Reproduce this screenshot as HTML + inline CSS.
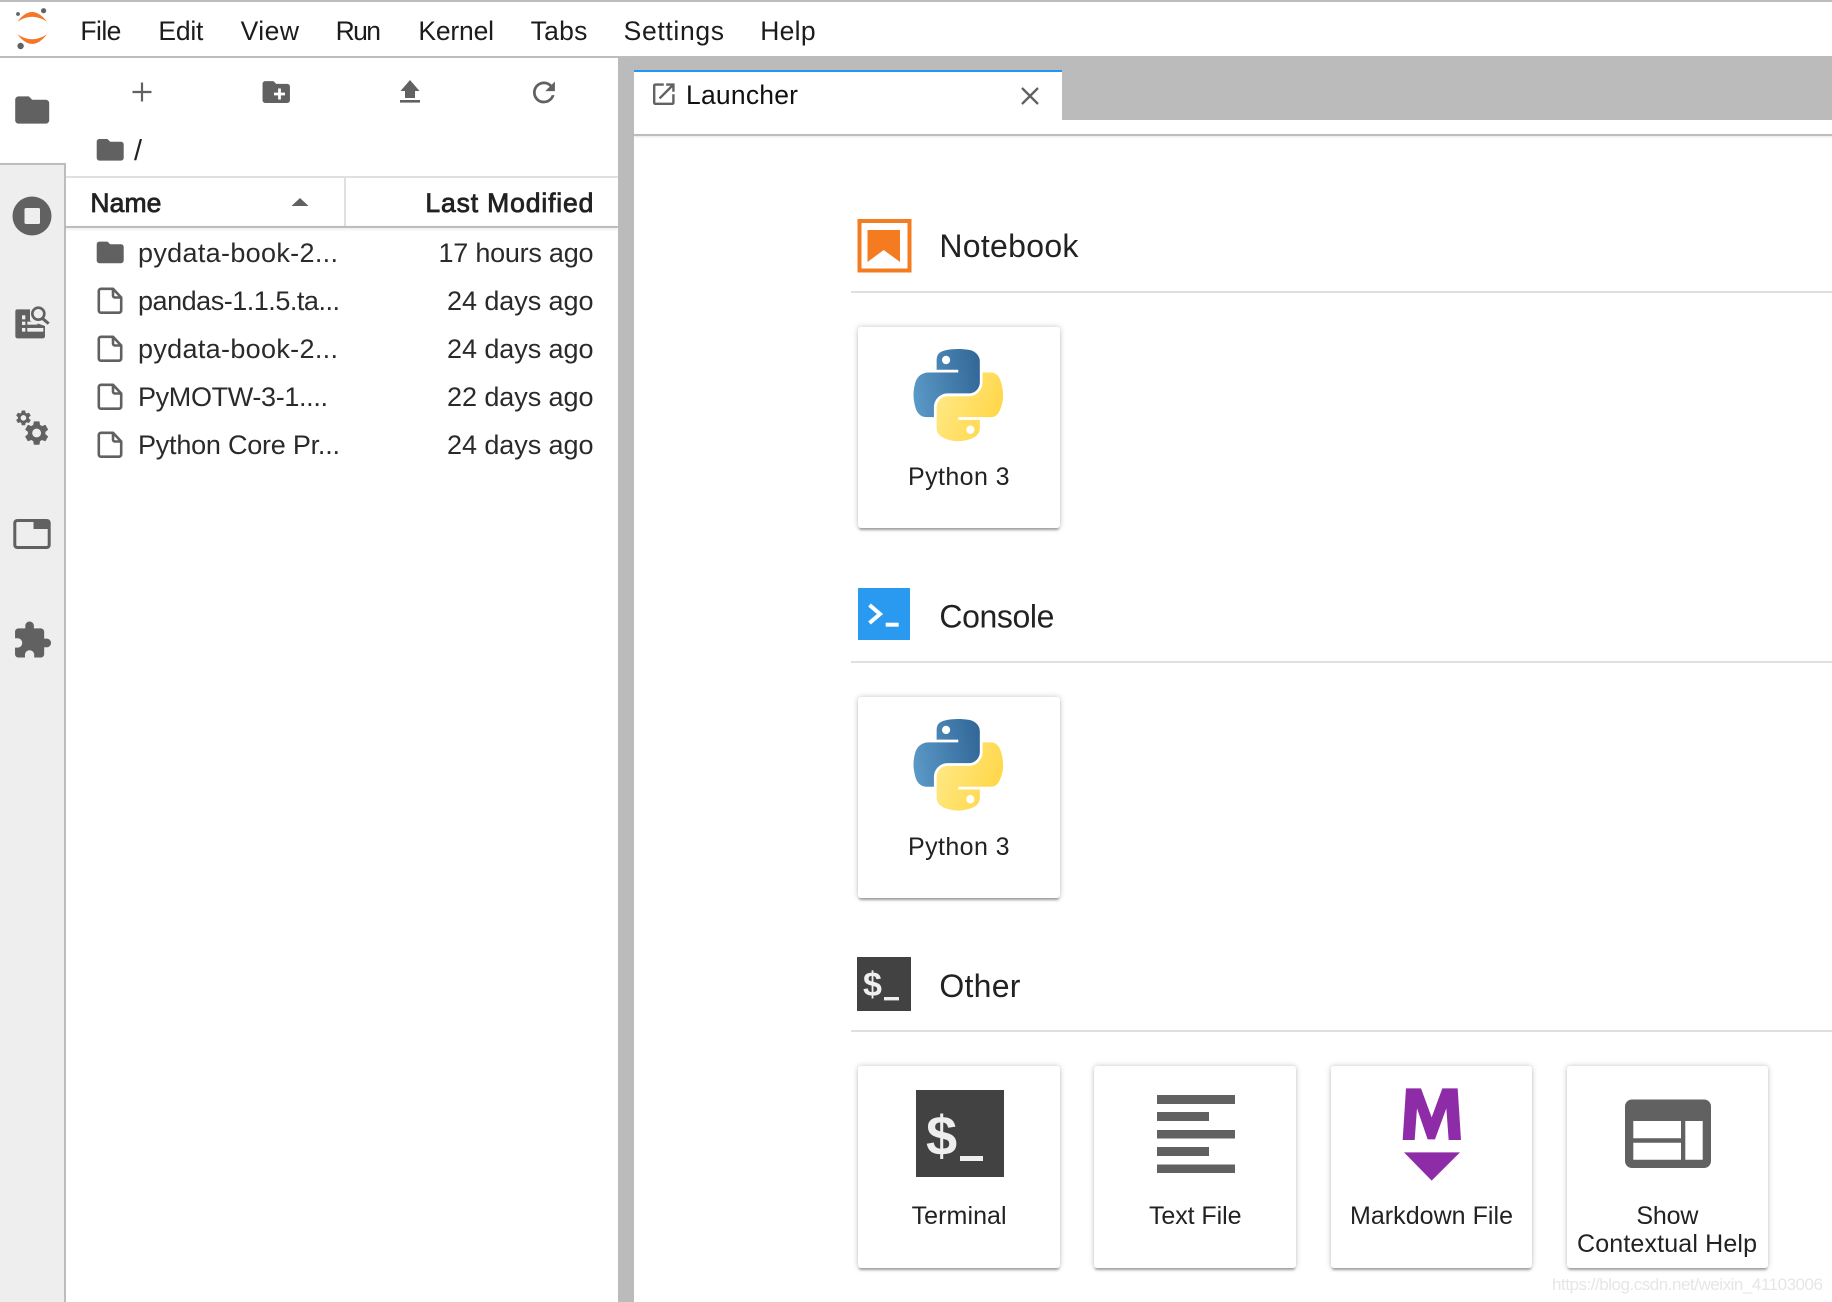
<!DOCTYPE html>
<html lang="en">
<head>
<meta charset="utf-8">
<title>JupyterLab</title>
<style>
html,body{margin:0;padding:0;background:#fff}
body{position:relative;width:1832px;height:1302px;overflow:hidden;font-family:"Liberation Sans",sans-serif}
.b{position:absolute}
.card{position:absolute;background:#fff;border-radius:3px;box-shadow:0 3px 2px -1px rgba(0,0,0,.3),0 0 6px rgba(0,0,0,.24)}
svg.o{position:absolute;left:0;top:0;filter:blur(.35px)}
text{font-family:"Liberation Sans",sans-serif;fill:#212121}
.m{font-size:26.5px;fill:#1c1c1c}
.r{font-size:27px;fill:#2a2a2a}
.h{font-size:26.5px;fill:#222;stroke:#222;stroke-width:.8px}
.s{font-size:32px;fill:#222}
.l{font-size:25px;fill:#222}
.ic{fill:#616161}
</style>
</head>
<body>
<div class="b" style="left:0;top:0;width:1832px;height:2px;background:#bdbdbd"></div>
<div class="b" style="left:0;top:56px;width:1832px;height:2px;background:#bdbdbd"></div>
<div class="b" style="left:0;top:58px;width:64px;height:1244px;background:#eee"></div>
<div class="b" style="left:0;top:58px;width:64px;height:105px;background:#fff"></div>
<div class="b" style="left:0;top:163px;width:65px;height:2px;background:#bdbdbd"></div>
<div class="b" style="left:64px;top:163px;width:2px;height:1139px;background:#bdbdbd"></div>
<div class="b" style="left:66px;top:176px;width:552px;height:2px;background:#e0e0e0"></div>
<div class="b" style="left:344px;top:178px;width:2px;height:48px;background:#e0e0e0"></div>
<div class="b" style="left:66px;top:226px;width:552px;height:2px;background:#bdbdbd;box-shadow:0 1px 3px rgba(0,0,0,.12)"></div>
<div class="b" style="left:618px;top:58px;width:16px;height:1244px;background:#bbb"></div>
<div class="b" style="left:634px;top:56px;width:1198px;height:64px;background:#bbb"></div>
<div class="b" style="left:634px;top:70px;width:428px;height:50px;background:#fff;border-top:2px solid #2196f3;box-sizing:border-box"></div>
<div class="b" style="left:634px;top:134px;width:1198px;height:2px;background:#bdbdbd;box-shadow:0 1px 2px rgba(0,0,0,.12)"></div>
<div class="b" style="left:851px;top:291px;width:981px;height:2px;background:#e0e0e0"></div>
<div class="b" style="left:851px;top:661px;width:981px;height:2px;background:#e0e0e0"></div>
<div class="b" style="left:851px;top:1030px;width:981px;height:2px;background:#e0e0e0"></div>
<div class="card" style="left:858px;top:326.5px;width:201.5px;height:201.5px"></div>
<div class="card" style="left:858px;top:696.5px;width:201.5px;height:201.5px"></div>
<div class="card" style="left:858px;top:1065.5px;width:201.5px;height:202px"></div>
<div class="card" style="left:1094px;top:1065.5px;width:201.5px;height:202px"></div>
<div class="card" style="left:1330.5px;top:1065.5px;width:201.5px;height:202px"></div>
<div class="card" style="left:1566.5px;top:1065.5px;width:201.5px;height:202px"></div>

<svg class="o" width="1832" height="1302" viewBox="0 0 1832 1302" xmlns="http://www.w3.org/2000/svg">
<defs>
<linearGradient id="pb" x1="0" y1=".62" x2="1" y2=".45"><stop offset="0" stop-color="#5a98c6"/><stop offset="1" stop-color="#33699a"/></linearGradient>
<linearGradient id="py" x1="0" y1=".3" x2="1" y2=".7"><stop offset="0" stop-color="#ffe986"/><stop offset="1" stop-color="#ffd543"/></linearGradient>
<g id="pylogo">
<path fill="url(#pb)" fill-rule="evenodd" d="M54.919 0.001c-4.584 0.022-8.961 0.413-12.812 1.095C30.76 3.099 28.7 7.295 28.7 15.032v10.219h26.813v3.406H18.638c-7.793 0-14.616 4.684-16.75 13.594-2.462 10.213-2.571 16.586 0 27.25 1.906 7.938 6.458 13.594 14.25 13.594h9.219v-12.25c0-8.85 7.657-16.656 16.75-16.656h26.781c7.455 0 13.406-6.138 13.406-13.625v-25.531c0-7.266-6.13-12.725-13.406-13.937C64.282 0.328 59.502-0.02 54.919 0.001zm-14.5 8.219c2.77 0 5.031 2.299 5.031 5.125 0 2.816-2.262 5.094-5.031 5.094-2.779 0-5.031-2.277-5.031-5.094 0-2.826 2.252-5.125 5.031-5.125z"/>
<path fill="url(#py)" fill-rule="evenodd" d="M85.638 28.657v11.906c0 9.231-7.826 17-16.75 17H42.106c-7.336 0-13.406 6.278-13.406 13.625v25.531c0 7.266 6.319 11.54 13.406 13.625 8.487 2.496 16.626 2.947 26.781 0 6.75-1.954 13.406-5.888 13.406-13.625V86.501H55.513v-3.406h40.188c7.793 0 10.696-5.436 13.406-13.594 2.799-8.399 2.68-16.476 0-27.25-1.926-7.757-5.604-13.594-13.406-13.594h-10.063zM70.575 93.313c2.779 0 5.031 2.277 5.031 5.094 0 2.826-2.252 5.125-5.031 5.125-2.77 0-5.031-2.299-5.031-5.125 0-2.816 2.262-5.094 5.031-5.094z"/>
</g>
<path id="folder" d="M10 4H4c-1.1 0-1.99.9-1.99 2L2 18c0 1.1.9 2 2 2h16c1.1 0 2-.9 2-2V8c0-1.1-.9-2-2-2h-8l-2-2z"/>
<g id="file" fill="none" stroke="#616161" stroke-width="2.6" stroke-linejoin="round">
<path d="M3.5 1.3H15.5L23.7 10V23a2.2 2.2 0 0 1-2.2 2.2H3.5A2.2 2.2 0 0 1 1.3 23V3.5A2.2 2.2 0 0 1 3.5 1.3z"/>
<path d="M15.5 1.3V8A2 2 0 0 0 17.5 10H23.7"/>
</g>
<path id="gear" fill-rule="evenodd" d="M19.14 12.94c.04-.3.06-.61.06-.94 0-.32-.02-.64-.07-.94l2.03-1.58c.18-.14.23-.41.12-.61l-1.92-3.32c-.12-.22-.37-.29-.59-.22l-2.39.96c-.5-.38-1.03-.7-1.62-.94l-.36-2.54c-.04-.24-.24-.41-.48-.41h-3.84c-.24 0-.43.17-.47.41l-.36 2.54c-.59.24-1.13.57-1.62.94l-2.39-.96c-.22-.08-.47 0-.59.22L2.74 8.87c-.12.21-.08.47.12.61l2.03 1.58c-.05.3-.09.63-.09.94s.02.64.07.94l-2.03 1.58c-.18.14-.23.41-.12.61l1.92 3.32c.12.22.37.29.59.22l2.39-.96c.5.38 1.03.7 1.62.94l.36 2.54c.05.24.24.41.48.41h3.84c.24 0 .44-.17.47-.41l.36-2.54c.59-.24 1.13-.56 1.62-.94l2.39.96c.22.08.47 0 .59-.22l1.92-3.32c.12-.22.07-.47-.12-.61l-2.01-1.58zM12 15.6c-1.98 0-3.6-1.62-3.6-3.6s1.62-3.6 3.6-3.6 3.6 1.62 3.6 3.6-1.62 3.6-3.6 3.6z"/>
</defs>

<!-- Jupyter logo -->
<path fill="#f37726" d="M17.5 21.7Q32 2.3 47 21.7Q32 11.7 17.5 21.7z"/>
<path fill="#f37726" d="M17.5 34.3Q32 53.7 47 34.3Q32 44.3 17.5 34.3z"/>
<circle cx="43.6" cy="10.7" r="2.6" fill="#616161"/>
<circle cx="18" cy="14" r="1.9" fill="#616161"/>
<circle cx="20.6" cy="46" r="3.2" fill="#616161"/>

<!-- Menu -->
<text class="m" x="80.4" y="40" textLength="41">File</text>
<text class="m" x="158.4" y="40" textLength="45">Edit</text>
<text class="m" x="240.6" y="40" textLength="58.4">View</text>
<text class="m" x="335.6" y="40" textLength="45.4">Run</text>
<text class="m" x="418.4" y="40" textLength="75.6">Kernel</text>
<text class="m" x="530.6" y="40" textLength="56.8">Tabs</text>
<text class="m" x="623.6" y="40" textLength="100.4">Settings</text>
<text class="m" x="760.2" y="40" textLength="55.4">Help</text>

<!-- Left sidebar icons -->
<use href="#folder" class="ic" transform="translate(11.8 89.6) scale(1.7)"/>
<circle cx="32" cy="216" r="19.5" fill="#616161"/>
<rect x="24.5" y="208" width="15.5" height="16" rx="1.5" fill="#eee"/>
<!-- property inspector -->
<g transform="translate(0 190) scale(.3333)">
<path class="ic" d="M52 358H90V392Q100 400 118 402L135 408V438Q135 445 128 445H53Q46 445 46 438V364Q46 358 52 358z"/>
<rect x="66" y="376" width="10" height="12" fill="#eee"/>
<rect x="66" y="395" width="10" height="10" fill="#eee"/>
<rect x="82" y="395" width="30" height="9" fill="#eee"/>
<rect x="66" y="414" width="10" height="11" fill="#eee"/>
<rect x="82" y="414" width="48" height="11" fill="#eee"/>
<circle cx="115" cy="371" r="18" fill="#eee" stroke="#616161" stroke-width="8"/>
<path d="M127 385L146 401" stroke="#616161" stroke-width="9" fill="none"/>
</g>
<use href="#gear" class="ic" transform="translate(14.2 408.6) scale(.77)"/>
<use href="#gear" class="ic" transform="translate(22 418.4) scale(1.22)"/>
<rect x="14.8" y="520.5" width="34.4" height="27" rx="2.5" fill="none" stroke="#616161" stroke-width="3"/>
<path class="ic" d="M33.5 519.5H48a2 2 0 0 1 2 2V529H33.5z"/>
<path class="ic" transform="translate(11.6 619.8) scale(1.714)" d="M20.5 11H19V7c0-1.1-.9-2-2-2h-4V3.5C13 2.12 11.88 1 10.5 1S8 2.12 8 3.5V5H4c-1.1 0-1.99.9-1.99 2v3.8H3.5c1.49 0 2.7 1.21 2.7 2.7s-1.21 2.7-2.7 2.7H2V20c0 1.1.9 2 2 2h3.8v-1.5c0-1.49 1.21-2.7 2.7-2.7 1.49 0 2.7 1.21 2.7 2.7V22H17c1.1 0 2-.9 2-2v-4h1.5c1.38 0 2.5-1.12 2.5-2.5S21.88 11 20.5 11z"/>

<!-- File browser toolbar -->
<path d="M142 82.5V101.5M132.5 92H151.5" stroke="#616161" stroke-width="2.2" fill="none"/>
<use href="#folder" class="ic" transform="translate(259.8 75.6) scale(1.37)"/>
<path d="M279.5 88.5V99.5M274 94H285" stroke="#fff" stroke-width="2.8" fill="none"/>
<path class="ic" d="M410 80L419.5 91H415V98H405V91H400.5z"/>
<rect x="400" y="100" width="20" height="2.6" class="ic"/>
<path class="ic" transform="translate(527.5 76) scale(1.37)" d="M17.65 6.35C16.2 4.9 14.21 4 12 4c-4.42 0-7.99 3.58-7.99 8s3.57 8 7.99 8c3.73 0 6.84-2.55 7.73-6h-2.08c-.82 2.33-3.04 4-5.65 4-3.31 0-6-2.69-6-6s2.69-6 6-6c1.66 0 3.14.69 4.22 1.78L13 11h7V4l-2.35 2.35z"/>

<!-- Breadcrumb -->
<use href="#folder" class="ic" transform="translate(94 133.6) scale(1.35)"/>
<text x="134" y="160" style="font-size:29px;fill:#222" textLength="8">/</text>

<!-- Listing header -->
<text class="h" x="90.4" y="212" textLength="71">Name</text>
<path class="ic" d="M291.5 206L300 198L308.5 206z"/>
<text class="h" x="425.4" y="212" textLength="168">Last Modified</text>

<!-- Listing rows -->
<use href="#folder" class="ic" transform="translate(94 236.2) scale(1.35)"/>
<text class="r" x="138" y="262" textLength="200">pydata-book-2...</text>
<text class="r" x="438.5" y="262" textLength="155">17 hours ago</text>
<use href="#file" transform="translate(97.5 287.5)"/>
<text class="r" x="138" y="310" textLength="202">pandas-1.1.5.ta...</text>
<text class="r" x="447" y="310" textLength="146.5">24 days ago</text>
<use href="#file" transform="translate(97.5 335.5)"/>
<text class="r" x="138" y="358" textLength="200">pydata-book-2...</text>
<text class="r" x="447" y="358" textLength="146.5">24 days ago</text>
<use href="#file" transform="translate(97.5 383.5)"/>
<text class="r" x="138" y="406" textLength="190">PyMOTW-3-1....</text>
<text class="r" x="447" y="406" textLength="146.5">22 days ago</text>
<use href="#file" transform="translate(97.5 431.5)"/>
<text class="r" x="138" y="454" textLength="202">Python Core Pr...</text>
<text class="r" x="447" y="454" textLength="146.5">24 days ago</text>

<!-- Tab -->
<path class="ic" transform="translate(649.4 79.8) scale(1.2)" d="M19 19H5V5h7V3H5c-1.11 0-2 .9-2 2v14c0 1.1.89 2 2 2h14c1.1 0 2-.9 2-2v-7h-2v7zM14 3v2h3.59l-9.83 9.83 1.41 1.41L19 6.41V10h2V3h-7z"/>
<text class="m" x="686" y="104" textLength="112" style="fill:#111">Launcher</text>
<path d="M1022 88L1038 104M1038 88L1022 104" stroke="#616161" stroke-width="2.3" fill="none"/>

<!-- Notebook section -->
<rect x="859.5" y="221" width="50" height="49.5" fill="#fff" stroke="#f47b20" stroke-width="4"/>
<path fill="#f47b20" d="M867.5 230H900V262L883.7 250L867.5 262z"/>
<text class="s" x="939.4" y="257" textLength="139">Notebook</text>
<use href="#pylogo" transform="translate(913.5 349) scale(.806 .82)"/>
<text class="l" x="908" y="484.8" textLength="101.5">Python 3</text>

<!-- Console section -->
<rect x="858" y="588" width="52" height="52" fill="#2a9af0"/>
<path d="M869.5 605L880 614L869.5 623" fill="none" stroke="#fff" stroke-width="4"/>
<rect x="885.7" y="622.7" width="13" height="4" fill="#fff"/>
<text class="s" x="939.4" y="627.3" textLength="115">Console</text>
<use href="#pylogo" transform="translate(913.5 719) scale(.806 .815)"/>
<text class="l" x="908" y="855" textLength="101.5">Python 3</text>

<!-- Other section -->
<rect x="857" y="957" width="54" height="54" fill="#424242"/>
<text x="863" y="996" style="font-size:34px;font-weight:700;fill:#eee">$</text>
<rect x="884" y="997" width="15" height="3.4" fill="#eee"/>
<text class="s" x="939.4" y="996.8" textLength="81">Other</text>

<!-- Terminal -->
<rect x="916" y="1090" width="88" height="87" fill="#424242"/>
<text x="926" y="1155" style="font-size:56px;font-weight:700;fill:#eee">$</text>
<rect x="960" y="1156" width="23" height="5" fill="#eee"/>
<text class="l" x="911.6" y="1224" textLength="95">Terminal</text>

<!-- Text file -->
<g class="ic">
<rect x="1157" y="1095" width="78" height="9"/>
<rect x="1157" y="1112" width="52" height="9"/>
<rect x="1157" y="1130" width="78" height="8.5"/>
<rect x="1157" y="1147" width="52" height="9"/>
<rect x="1157" y="1164.5" width="78" height="8.5"/>
</g>
<text class="l" x="1149" y="1224" textLength="92.5">Text File</text>

<!-- Markdown -->
<g transform="translate(1320 1040) scale(.33333)" fill="#8e2ca8">
<path d="M258 145H303L335 232L367 145H413L423 300H386L379 205L345 298H323L291 205L284 300H248z"/>
<path d="M252 337H420L335 422z"/>
</g>
<text class="l" x="1350" y="1224" textLength="163">Markdown File</text>

<!-- Contextual help -->
<path class="ic" fill-rule="evenodd" d="M1632 1099.5H1704a7 7 0 0 1 7 7V1161a7 7 0 0 1-7 7H1632a7 7 0 0 1-7-7V1106.5a7 7 0 0 1 7-7zM1633.3 1121V1138.3H1681V1121zM1633.3 1142.7V1159.7H1681V1142.7zM1685.3 1121V1159.7H1702.7V1121z"/>
<text class="l" x="1636.4" y="1224" textLength="62">Show</text>
<text class="l" x="1577" y="1252" textLength="180">Contextual Help</text>

<!-- Watermark -->
<text x="1552" y="1290" textLength="271" style="font-size:17px;fill:#e6e6e6">https://blog.csdn.net/weixin_41103006</text>
</svg>
</body>
</html>
